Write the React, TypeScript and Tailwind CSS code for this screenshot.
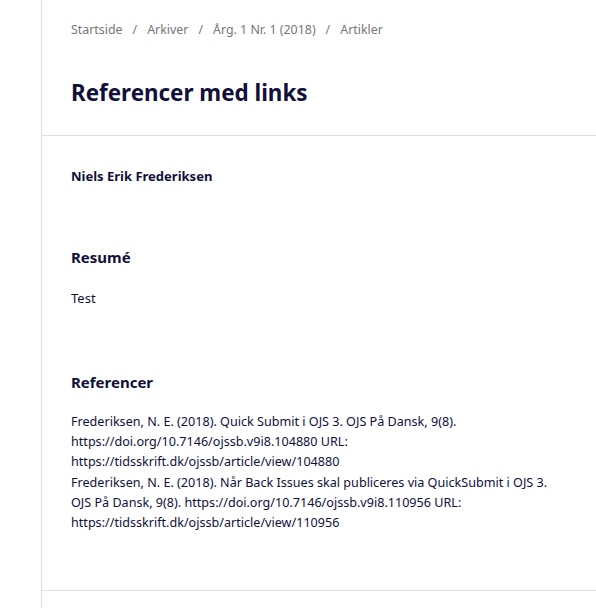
const crumbs = ["Startside", "Arkiver", "Årg. 1 Nr. 1 (2018)", "Artikler"];

export default function App() {
  return (
    <div className="min-h-[608px] bg-white font-['Noto_Sans',sans-serif] text-[#10103a]">
      <div className="ml-[41px] min-h-[608px] border-l border-[#ddd]">
        <header className="border-b border-[#ddd] px-[29px] pt-[20px] pb-[26px]">
          <nav className="flex items-center gap-[10px] text-[12.4px] leading-5 text-[#777]">
            {crumbs.map((c, i) => (
              <span key={c} className="flex items-center gap-[10px]">
                {i > 0 && <span>/</span>}
                <span>{c}</span>
              </span>
            ))}
          </nav>
          <h1 className="mt-[37px] text-[22.4px] font-bold leading-[32px]">Referencer med links</h1>
        </header>

        <main className="border-b border-[#ddd] px-[29px] pt-[30px] pb-[57px]">
          <p className="text-[13px] font-bold leading-5">Niels Erik Frederiksen</p>

          <section className="mt-[61px]">
            <h2 className="text-[15px] font-bold leading-5">Resumé</h2>
            <p className="mt-[21px] text-[13px] leading-5">Test</p>
          </section>

          <section className="mt-[64px]">
            <h2 className="text-[15px] font-bold leading-5">Referencer</h2>
            <div className="mt-[20px] text-[12.6px] leading-[20.2px]">
              <p>
                Frederiksen, N. E. (2018). Quick Submit i OJS 3. OJS På Dansk, 9(8).
                <br />
                https://doi.org/10.7146/ojssb.v9i8.104880 URL:
                <br />
                https://tidsskrift.dk/ojssb/article/view/104880
              </p>
              <p>
                Frederiksen, N. E. (2018). Når Back Issues skal publiceres via QuickSubmit i OJS 3.
                <br />
                OJS På Dansk, 9(8). https://doi.org/10.7146/ojssb.v9i8.110956 URL:
                <br />
                https://tidsskrift.dk/ojssb/article/view/110956
              </p>
            </div>
          </section>
        </main>
      </div>
    </div>
  );
}
